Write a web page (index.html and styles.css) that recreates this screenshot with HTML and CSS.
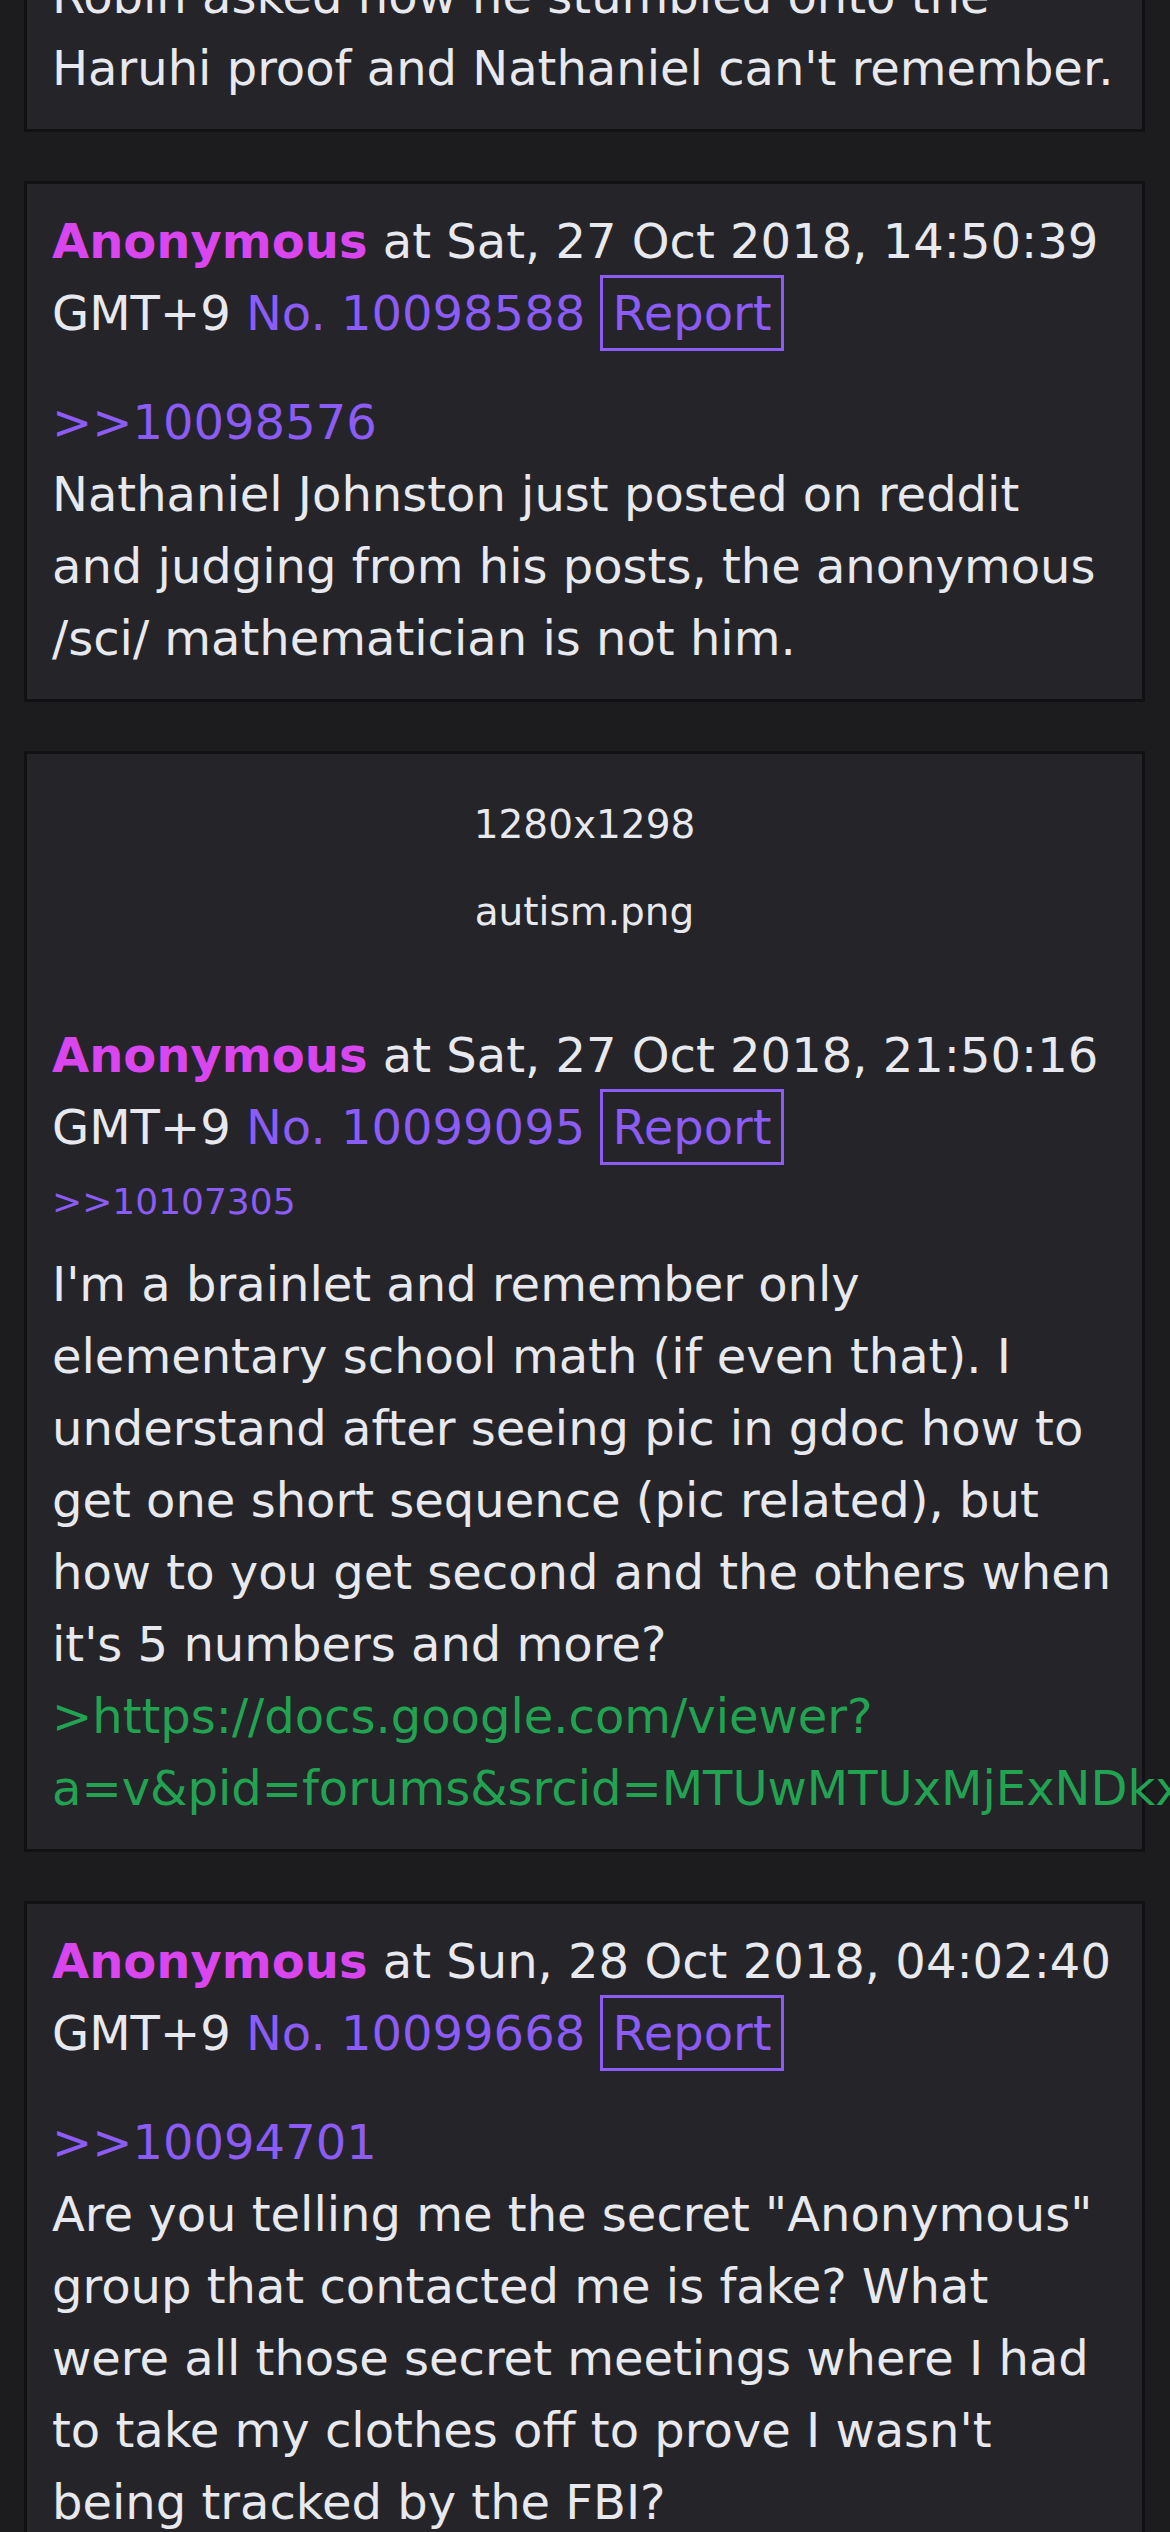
FILE: index.html
```html
<!DOCTYPE html>
<html lang="en">
<head>
<meta charset="UTF-8">
<meta name="viewport" content="width=device-width, initial-scale=1.0">
<title>/sci/ thread archive</title>
<link rel="stylesheet" href="styles.css">
</head>
<body>
<div class="thread">

  <div class="post post-first">
    <div class="post-body">
      Robin asked how he stumbled onto the Haruhi proof and Nathaniel can't remember.
    </div>
  </div>

  <div class="post">
    <div class="post-header">
      <span class="name">Anonymous</span> at Sat, 27 Oct 2018, 14:50:39 GMT+9
      <a class="post-no" href="#p10098588">No. 10098588</a>
      <a class="report" href="#report">Report</a>
    </div>
    <div class="post-body">
      <a class="quotelink" href="#p10098576">&gt;&gt;10098576</a><br>
      Nathaniel Johnston just posted on reddit and judging from his posts, the anonymous /sci/ mathematician is not him.
    </div>
  </div>

  <div class="post">
    <div class="file">
      <div class="file-size">1280x1298</div>
      <div class="file-name">autism.png</div>
    </div>
    <div class="post-header">
      <span class="name">Anonymous</span> at Sat, 27 Oct 2018, 21:50:16 GMT+9
      <a class="post-no" href="#p10099095">No. 10099095</a>
      <a class="report" href="#report">Report</a>
    </div>
    <div class="backlinks">
      <a href="#p10107305">&gt;&gt;10107305</a>
    </div>
    <div class="post-body">
      I'm a brainlet and remember only elementary school math (if even that). I understand after seeing pic in gdoc how to get one short sequence (pic related), but how to you get second and the others when it's 5 numbers and more?<br>
      <span class="greentext">&gt;https://docs.google.com/viewer?<wbr>a=v&amp;pid=forums&amp;srcid=MTUwMTUxMjExNDkxMzc0NDQ0NjgBMTA1NjY3NjMxNDQ5NTYxNzcyMDYBSnhXNGQ2S2pNQTdKAjAuMQEBdjI</span>
    </div>
  </div>

  <div class="post">
    <div class="post-header">
      <span class="name">Anonymous</span> at Sun, 28 Oct 2018, 04:02:40 GMT+9
      <a class="post-no" href="#p10099668">No. 10099668</a>
      <a class="report" href="#report">Report</a>
    </div>
    <div class="post-body">
      <a class="quotelink" href="#p10094701">&gt;&gt;10094701</a><br>
      Are you telling me the secret "Anonymous" group that contacted me is fake? What were all those secret meetings where I had to take my clothes off to prove I wasn't being tracked by the FBI?
    </div>
  </div>

</div>
</body>
</html>
```

FILE: styles.css
```css
html, body {
  overflow-x: hidden;
}
body {
  margin: 0;
  background-color: #1c1c1f;
  color: #e8e9ee;
  font-family: "DejaVu Sans", Verdana, sans-serif;
  font-size: 48px;
  line-height: 72px;
}
a {
  text-decoration: none;
}
.thread {
  padding-bottom: 48px;
}
.post {
  margin: 0 25px 49px 24px;
  padding: 21px 25px 25px 25px;
  background-color: #252529;
  border: 3px solid #111113;
}
.post-first {
  margin-top: -64px;
}
.name {
  color: #d946ef;
  font-weight: bold;
}
.post-no {
  color: #8b5cf6;
}
.report {
  color: #8b5cf6;
  border: 3px solid #8b5cf6;
  padding: 7px 9px;
}
.post-header + .post-body {
  margin-top: 37px;
}
.post-first .post-body {
  margin-top: 0;
}
.quotelink {
  color: #8b5cf6;
}
.backlinks {
  margin-top: 12px;
  font-size: 36px;
  line-height: 54px;
}
.backlinks a {
  color: #8b5cf6;
}
.backlinks + .post-body {
  margin-top: 19px;
}
.greentext {
  color: #22a352;
}
.file {
  text-align: center;
  font-size: 39px;
  line-height: 52px;
  padding-top: 24px;
  margin-bottom: 81px;
}
.file-size {
  margin-bottom: 35px;
}
```
